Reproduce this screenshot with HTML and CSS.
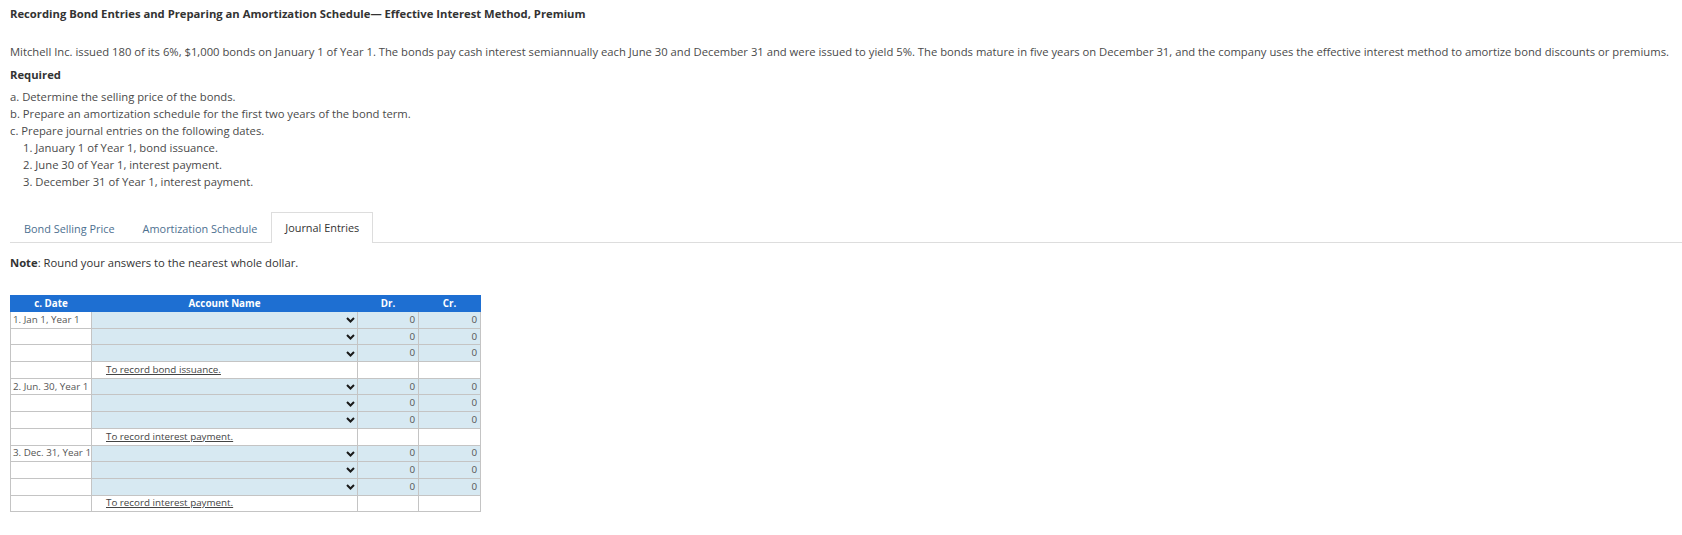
FILE: index.html
```html
<!DOCTYPE html>
<html>
<head>
<meta charset="utf-8">
<link rel="stylesheet" href="styles.css">
</head>
<body>
<div class="page">
  <h1 class="title">Recording Bond Entries and Preparing an Amortization Schedule— Effective Interest Method, Premium</h1>
  <p class="intro">Mitchell Inc. issued 180 of its 6%, $1,000 bonds on January 1 of Year 1. The bonds pay cash interest semiannually each June 30 and December 31 and were issued to yield 5%. The bonds mature in five years on December 31, and the company uses the effective interest method to amortize bond discounts or premiums.</p>
  <div class="required">Required</div>
  <ul class="reqlist">
    <li>a. Determine the selling price of the bonds.</li>
    <li>b. Prepare an amortization schedule for the first two years of the bond term.</li>
    <li>c. Prepare journal entries on the following dates.</li>
    <li class="sub">1. January 1 of Year 1, bond issuance.</li>
    <li class="sub">2. June 30 of Year 1, interest payment.</li>
    <li class="sub">3. December 31 of Year 1, interest payment.</li>
  </ul>
  <div class="tabs">
    <div class="tab">Bond Selling Price</div>
    <div class="tab">Amortization Schedule</div>
    <div class="tab active">Journal Entries</div>
  </div>
  <div class="note"><b>Note</b>: Round your answers to the nearest whole dollar.</div>
  <table class="journal">
    <colgroup><col class="c-date"><col class="c-acct"><col class="c-dr"><col class="c-cr"></colgroup>
    <thead>
      <tr><th>c. Date</th><th>Account Name</th><th>Dr.</th><th>Cr.</th></tr>
    </thead>
    <tbody>
      <tr><td class="date">1. Jan 1, Year 1</td><td class="acct"><span class="chev"><svg width="9" height="6" viewBox="0 0 9 6"><polyline points="1,1 4.5,4.5 8,1" fill="none" stroke="#1a1a1a" stroke-width="2"/></svg></span></td><td class="num">0</td><td class="num">0</td></tr>
      <tr><td class="date"></td><td class="acct"><span class="chev"><svg width="9" height="6" viewBox="0 0 9 6"><polyline points="1,1 4.5,4.5 8,1" fill="none" stroke="#1a1a1a" stroke-width="2"/></svg></span></td><td class="num">0</td><td class="num">0</td></tr>
      <tr><td class="date"></td><td class="acct"><span class="chev"><svg width="9" height="6" viewBox="0 0 9 6"><polyline points="1,1 4.5,4.5 8,1" fill="none" stroke="#1a1a1a" stroke-width="2"/></svg></span></td><td class="num">0</td><td class="num">0</td></tr>
      <tr class="memo"><td></td><td><span class="memo-text">To record bond issuance.</span></td><td></td><td></td></tr>
      <tr><td class="date">2. Jun. 30, Year 1</td><td class="acct"><span class="chev"><svg width="9" height="6" viewBox="0 0 9 6"><polyline points="1,1 4.5,4.5 8,1" fill="none" stroke="#1a1a1a" stroke-width="2"/></svg></span></td><td class="num">0</td><td class="num">0</td></tr>
      <tr><td class="date"></td><td class="acct"><span class="chev"><svg width="9" height="6" viewBox="0 0 9 6"><polyline points="1,1 4.5,4.5 8,1" fill="none" stroke="#1a1a1a" stroke-width="2"/></svg></span></td><td class="num">0</td><td class="num">0</td></tr>
      <tr><td class="date"></td><td class="acct"><span class="chev"><svg width="9" height="6" viewBox="0 0 9 6"><polyline points="1,1 4.5,4.5 8,1" fill="none" stroke="#1a1a1a" stroke-width="2"/></svg></span></td><td class="num">0</td><td class="num">0</td></tr>
      <tr class="memo"><td></td><td><span class="memo-text">To record interest payment.</span></td><td></td><td></td></tr>
      <tr><td class="date">3. Dec. 31, Year 1</td><td class="acct"><span class="chev"><svg width="9" height="6" viewBox="0 0 9 6"><polyline points="1,1 4.5,4.5 8,1" fill="none" stroke="#1a1a1a" stroke-width="2"/></svg></span></td><td class="num">0</td><td class="num">0</td></tr>
      <tr><td class="date"></td><td class="acct"><span class="chev"><svg width="9" height="6" viewBox="0 0 9 6"><polyline points="1,1 4.5,4.5 8,1" fill="none" stroke="#1a1a1a" stroke-width="2"/></svg></span></td><td class="num">0</td><td class="num">0</td></tr>
      <tr><td class="date"></td><td class="acct"><span class="chev"><svg width="9" height="6" viewBox="0 0 9 6"><polyline points="1,1 4.5,4.5 8,1" fill="none" stroke="#1a1a1a" stroke-width="2"/></svg></span></td><td class="num">0</td><td class="num">0</td></tr>
      <tr class="memo"><td></td><td><span class="memo-text">To record interest payment.</span></td><td></td><td></td></tr>
    </tbody>
  </table>
</div>
</body>
</html>
```
FILE: styles.css
```css
html, body {
  margin: 0;
  padding: 0;
  background: #fff;
}
body {
  font-family: "Open Sans", "Liberation Sans", sans-serif;
  color: #333;
  font-size: 11.25px;
}
.page {
  padding: 5px 0 0 10px;
}
.title {
  margin: 0;
  font-size: 11.25px;
  font-weight: 700;
  line-height: 18px;
  color: #333;
}
.intro {
  margin: 20px 0 0 0;
  line-height: 18px;
  color: #4a4a4a;
}
.required {
  margin-top: 5px;
  font-weight: 700;
  line-height: 18px;
}
.reqlist {
  list-style: none;
  margin: 4px 0 0 0;
  padding: 0;
  line-height: 17px;
  color: #4a4a4a;
}
.reqlist .sub {
  padding-left: 13px;
}
.tabs {
  display: flex;
  margin: 23px 0 0 0;
  border-bottom: 1px solid #ddd;
  height: 29px;
  font-size: 10.9px;
}
.tab {
  padding: 0 13px;
  line-height: 29px;
  color: #4d7090;
  border: 1px solid transparent;
  border-bottom: none;
  height: 30px;
  box-sizing: border-box;
}
.tab.active {
  color: #333;
  background: #fff;
  border-color: #ddd;
  margin-top: -1px;
  height: 31px;
}
.note {
  margin-top: 12px;
  line-height: 16px;
  color: #333;
}
.journal {
  margin-top: 24px;
  border-collapse: collapse;
  table-layout: fixed;
  width: 471px;
  font-size: 9.8px;
}
.c-date { width: 81px; }
.c-acct { width: 266px; }
.c-dr { width: 61px; }
.c-cr { width: 62px; }
.journal th {
  background: #1e6fd2;
  color: #fff;
  font-weight: 700;
  height: 15px;
  padding: 0;
  text-align: center;
  border: 1px solid #1e6fd2;
  line-height: 14px;
}
.journal td {
  border: 1px solid #c4c4c4;
  height: 15.7px;
  padding: 0;
  color: #555;
  line-height: 14px;
}
.journal td.date {
  padding-left: 2px;
  background: #fff;
}
.journal td.acct {
  background: #d7e9f2;
  text-align: right;
  padding-right: 2px;
}
.journal td.num {
  background: #d7e9f2;
  text-align: right;
  padding-right: 3px;
}
.chev {
  display: inline-block;
  vertical-align: middle;
  line-height: 0;
}
.memo td {
  background: #fff;
}
.memo-text {
  margin-left: 14px;
  text-decoration: underline;
  color: #444;
}
```
